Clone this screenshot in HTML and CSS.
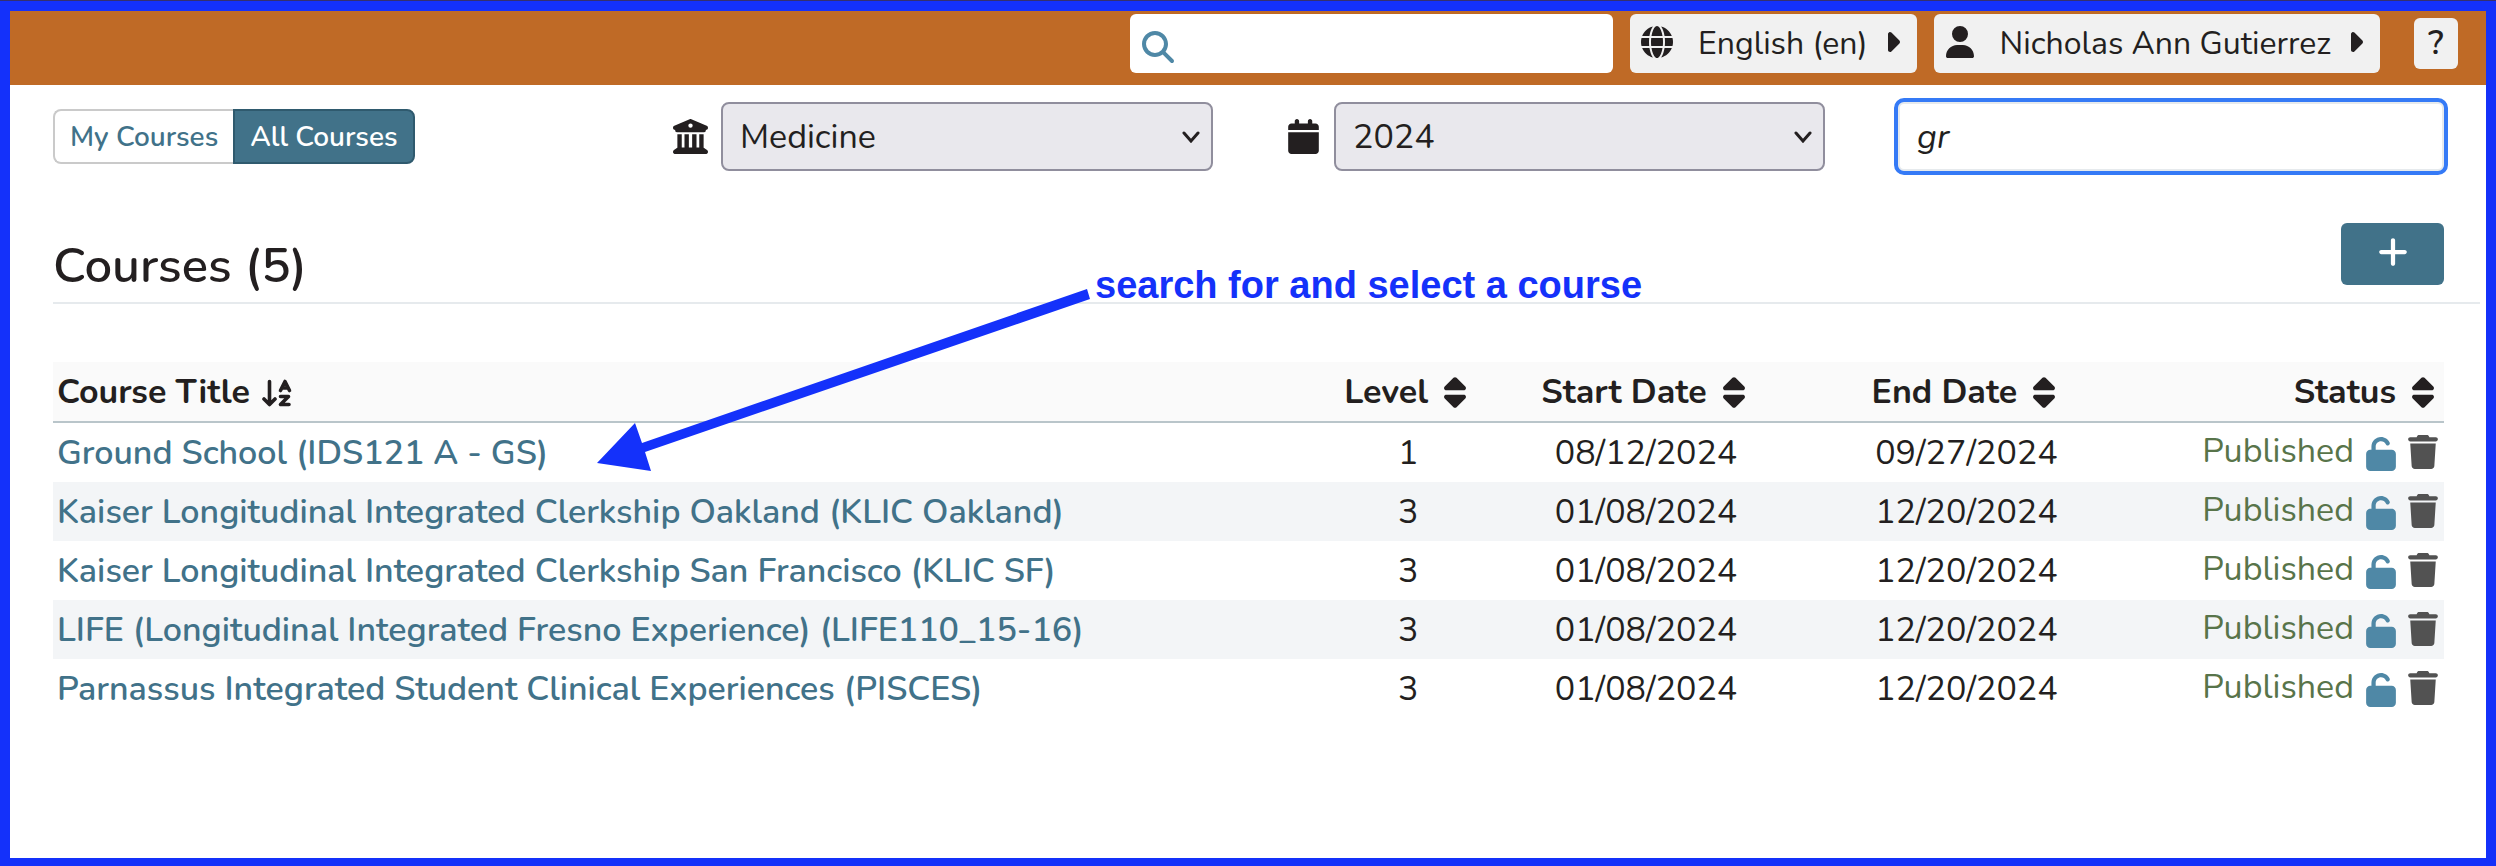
FILE: index.html
```html
<!DOCTYPE html>
<html lang="en">
<head>
<meta charset="utf-8">
<title>Courses</title>
<link rel="stylesheet" href="styles.css">
</head>
<body>
<svg class="sprite" aria-hidden="true">
  <symbol id="search" viewBox="0 0 512 512"><path d="M416 208c0 45.900-14.900 88.300-40 122.700L502.600 457.400c12.500 12.500 12.500 32.800 0 45.300s-32.800 12.500-45.300 0L330.700 376c-34.400 25.200-76.800 40-122.700 40C93.100 416 0 322.900 0 208S93.100 0 208 0S416 93.100 416 208zM208 352a144 144 0 1 0 0-288 144 144 0 1 0 0 288z"/></symbol>
  <symbol id="globe" viewBox="0 0 512 512"><path d="M352 256c0 22.200-1.200 43.600-3.300 64l-185.300 0c-2.200-20.400-3.300-41.800-3.300-64s1.200-43.600 3.300-64l185.300 0c2.200 20.400 3.300 41.800 3.300 64zm28.800-64l123.100 0c5.300 20.500 8.100 41.900 8.100 64s-2.800 43.500-8.100 64l-123.100 0c2.100-20.600 3.200-42 3.200-64s-1.100-43.400-3.200-64zm112.600-32l-116.700 0c-10-63.900-29.800-117.400-55.300-151.600c78.300 20.700 142 77.500 171.900 151.600zm-149.100 0l-176.600 0c6.100-36.400 15.500-68.600 27-94.700c10.500-23.600 22.200-40.700 33.500-51.500C239.400 3.200 248.700 0 256 0s16.600 3.200 27.800 13.800c11.300 10.800 23 27.900 33.500 51.500c11.600 26 20.900 58.200 27 94.700zm-209 0L18.600 160C48.600 85.900 112.200 29.100 190.600 8.400C165.100 42.600 145.300 96.100 135.300 160zM8.100 192l123.100 0c-2.100 20.600-3.200 42-3.200 64s1.100 43.400 3.200 64L8.100 320C2.800 299.500 0 278.100 0 256s2.800-43.500 8.100-64zM194.700 446.600c-11.600-26-20.900-58.200-27-94.600l176.600 0c-6.100 36.400-15.500 68.600-27 94.600c-10.500 23.600-22.200 40.700-33.500 51.500C272.600 508.800 263.300 512 256 512s-16.600-3.200-27.800-13.800c-11.300-10.800-23-27.900-33.500-51.500zM135.300 352c10 63.900 29.800 117.400 55.300 151.600C112.200 482.900 48.600 426.100 18.600 352l116.700 0zm358.100 0c-30 74.100-93.600 130.900-171.900 151.600c25.500-34.200 45.200-87.700 55.300-151.600l116.700 0z"/></symbol>
  <symbol id="user" viewBox="0 0 448 512"><path d="M224 256A128 128 0 1 0 224 0a128 128 0 1 0 0 256zm-45.700 48C79.800 304 0 383.800 0 482.300C0 498.700 13.300 512 29.700 512l388.600 0c16.400 0 29.700-13.300 29.700-29.700C448 383.800 368.200 304 269.700 304l-91.400 0z"/></symbol>
  <symbol id="caret" viewBox="64 0 192 512"><path d="M246.600 278.600c12.500-12.500 12.500-32.800 0-45.300l-128-128c-9.200-9.200-22.900-11.900-34.900-6.900s-19.800 16.600-19.800 29.600l0 256c0 12.900 7.800 24.600 19.800 29.600s25.700 2.200 34.900-6.900l128-128z"/></symbol>
  <symbol id="school" viewBox="0 0 512 512"><path d="M243.400 2.600l-224 96c-14 6-21.800 21-18.700 35.800S16.800 160 32 160l0 8c0 13.300 10.700 24 24 24l400 0c13.300 0 24-10.700 24-24l0-8c15.200 0 28.300-10.700 31.300-25.600s-4.800-29.900-18.700-35.800l-224-96c-8-3.400-17.200-3.400-25.200 0zM128 224l-64 0 0 196.300c-.6 .3-1.200 .7-1.800 1.100l-48 32c-11.700 7.800-17 22.400-12.900 35.900S17.900 512 32 512l448 0c14.100 0 26.500-9.200 30.600-22.700s-1.100-28.100-12.900-35.900l-48-32c-.6-.4-1.200-.7-1.800-1.100L448 224l-64 0 0 192-40 0 0-192-64 0 0 192-48 0 0-192-64 0 0 192-40 0 0-192zM256 64a32 32 0 1 1 0 64 32 32 0 1 1 0-64z"/></symbol>
  <symbol id="calendar" viewBox="0 0 448 512"><path d="M96 32l0 32L48 64C21.500 64 0 85.500 0 112l0 48 448 0 0-48c0-26.500-21.500-48-48-48l-48 0 0-32c0-17.700-14.300-32-32-32s-32 14.300-32 32l0 32L160 64l0-32c0-17.700-14.300-32-32-32S96 14.300 96 32zM448 192L0 192 0 464c0 26.500 21.500 48 48 48l352 0c26.500 0 48-21.500 48-48l0-272z"/></symbol>
  <symbol id="plus" viewBox="0 0 448 512"><path d="M256 80c0-17.700-14.300-32-32-32s-32 14.300-32 32l0 144L48 224c-17.700 0-32 14.300-32 32s14.300 32 32 32l144 0 0 144c0 17.700 14.300 32 32 32s32-14.300 32-32l0-144 144 0c17.700 0 32-14.300 32-32s-14.300-32-32-32l-144 0 0-144z"/></symbol>
  <symbol id="sort" viewBox="0 0 320 512"><path d="M137.400 41.400c12.500-12.500 32.800-12.500 45.300 0l128 128c9.200 9.200 11.900 22.900 6.900 34.900s-16.600 19.800-29.600 19.800L32 224c-12.900 0-24.600-7.800-29.600-19.800s-2.200-25.700 6.900-34.900l128-128zm0 429.300l-128-128c-9.200-9.200-11.900-22.900-6.900-34.900s16.600-19.800 29.600-19.800l256 0c12.900 0 24.600 7.800 29.600 19.800s2.200 25.700-6.900 34.900l-128 128c-12.500 12.500-32.800 12.500-45.300 0z"/></symbol>
  <symbol id="unlock" viewBox="0 0 448 512"><path d="M144 144c0-44.200 35.800-80 80-80c31.900 0 59.400 18.600 72.300 45.700c7.600 16 26.700 22.800 42.600 15.200s22.800-26.700 15.200-42.600C331 33.700 281.500 0 224 0C144.500 0 80 64.500 80 144l0 48-16 0c-35.300 0-64 28.700-64 64L0 448c0 35.300 28.700 64 64 64l320 0c35.300 0 64-28.700 64-64l0-192c0-35.300-28.700-64-64-64l-240 0 0-48z"/></symbol>
  <symbol id="trash" viewBox="0 0 448 512"><path d="M135.200 17.700L128 32 32 32C14.300 32 0 46.300 0 64S14.300 96 32 96l384 0c17.700 0 32-14.300 32-32s-14.300-32-32-32l-96 0-7.200-14.300C307.400 6.800 296.300 0 284.200 0L163.800 0c-12.100 0-23.200 6.800-28.600 17.700zM416 128L32 128 53.200 467c1.600 25.300 22.600 45 47.900 45l245.800 0c25.300 0 46.300-19.700 47.900-45L416 128z"/></symbol>
  <symbol id="sorted" viewBox="0 0 30 28"><g fill="none" stroke="currentColor" stroke-width="3.600" stroke-linecap="round" stroke-linejoin="round"><path d="M7.500 2.500V25M2 20l5.500 5.500L13 20"/><path d="M18.500 11.500L23 2.500l4.500 9M20.500 9h5"/><path d="M18.500 17.500h8l-8 8h8.500"/></g></symbol>
  <symbol id="chevron" viewBox="0 0 18 12"><path d="M2 2l7 8 7-8" fill="none" stroke="currentColor" stroke-width="3" stroke-linecap="round"/></symbol>
</svg>

<div class="page">
  <header class="topbar">
    <label class="site-search">
      <svg class="icon"><use href="#search"/></svg>
      <input type="search" aria-label="Search">
    </label>
    <button class="menu-button" type="button">
      <svg class="icon"><use href="#globe"/></svg>
      <span>English (en)</span>
      <svg class="caret"><use href="#caret"/></svg>
    </button>
    <button class="menu-button" type="button">
      <svg class="icon user"><use href="#user"/></svg>
      <span>Nicholas Ann Gutierrez</span>
      <svg class="caret"><use href="#caret"/></svg>
    </button>
    <button class="help" type="button">?</button>
  </header>

  <main>
    <div class="filters">
      <div class="toggle">
        <button type="button">My Courses</button><button type="button" class="active">All Courses</button>
      </div>
      <div class="filter">
        <label for="school-select" aria-label="School"><svg class="school"><use href="#school"/></svg></label>
        <div class="select">
          <select id="school-select"><option>Medicine</option></select>
          <svg class="chevron"><use href="#chevron"/></svg>
        </div>
      </div>
      <div class="filter">
        <label for="year-select" aria-label="Year"><svg class="calendar"><use href="#calendar"/></svg></label>
        <div class="select">
          <select id="year-select"><option>2024</option></select>
          <svg class="chevron"><use href="#chevron"/></svg>
        </div>
      </div>
      <input class="title-filter" type="text" value="gr" aria-label="Filter by course title">
    </div>

    <div class="heading">
      <h1>Courses (5)</h1>
      <button type="button" class="add" aria-label="New course"><svg><use href="#plus"/></svg></button>
    </div>

    <table>
      <colgroup><col class="col-title"><col class="col-level"><col class="col-date"><col class="col-date"><col class="col-status"></colgroup>
      <thead>
        <tr>
          <th class="left"><button type="button">Course Title<svg class="sorted"><use href="#sorted"/></svg></button></th>
          <th><button type="button">Level<svg class="sort"><use href="#sort"/></svg></button></th>
          <th><button type="button">Start Date<svg class="sort"><use href="#sort"/></svg></button></th>
          <th><button type="button">End Date<svg class="sort"><use href="#sort"/></svg></button></th>
          <th class="right"><button type="button">Status<svg class="sort"><use href="#sort"/></svg></button></th>
        </tr>
      </thead>
      <tbody>
        <tr>
          <td class="left"><a href="#">Ground School (IDS121 A - GS)</a></td><td>1</td><td>08/12/2024</td><td>09/27/2024</td>
          <td><div class="status"><span>Published</span><button type="button" class="lock" aria-label="Lock"><svg><use href="#unlock"/></svg></button><button type="button" class="remove" aria-label="Delete"><svg><use href="#trash"/></svg></button></div></td>
        </tr>
        <tr>
          <td class="left"><a href="#">Kaiser Longitudinal Integrated Clerkship Oakland (KLIC Oakland)</a></td><td>3</td><td>01/08/2024</td><td>12/20/2024</td>
          <td><div class="status"><span>Published</span><button type="button" class="lock" aria-label="Lock"><svg><use href="#unlock"/></svg></button><button type="button" class="remove" aria-label="Delete"><svg><use href="#trash"/></svg></button></div></td>
        </tr>
        <tr>
          <td class="left"><a href="#">Kaiser Longitudinal Integrated Clerkship San Francisco (KLIC SF)</a></td><td>3</td><td>01/08/2024</td><td>12/20/2024</td>
          <td><div class="status"><span>Published</span><button type="button" class="lock" aria-label="Lock"><svg><use href="#unlock"/></svg></button><button type="button" class="remove" aria-label="Delete"><svg><use href="#trash"/></svg></button></div></td>
        </tr>
        <tr>
          <td class="left"><a href="#">LIFE (Longitudinal Integrated Fresno Experience) (LIFE110_15-16)</a></td><td>3</td><td>01/08/2024</td><td>12/20/2024</td>
          <td><div class="status"><span>Published</span><button type="button" class="lock" aria-label="Lock"><svg><use href="#unlock"/></svg></button><button type="button" class="remove" aria-label="Delete"><svg><use href="#trash"/></svg></button></div></td>
        </tr>
        <tr>
          <td class="left"><a href="#">Parnassus Integrated Student Clinical Experiences (PISCES)</a></td><td>3</td><td>01/08/2024</td><td>12/20/2024</td>
          <td><div class="status"><span>Published</span><button type="button" class="lock" aria-label="Lock"><svg><use href="#unlock"/></svg></button><button type="button" class="remove" aria-label="Delete"><svg><use href="#trash"/></svg></button></div></td>
        </tr>
      </tbody>
    </table>
  </main>

  <svg class="note-arrow" viewBox="0 0 493 182" aria-hidden="true"><polygon points="0,174 38,134 45,154 490,0 493,10 48,163 54,182"/></svg>
  <p class="note">search for and select a course</p>
</div>
</body>
</html>
```
FILE: styles.css
```css
* { box-sizing: border-box; }

body {
  margin: 0;
  color: #231f20;
  background: #fff;
  font-family: Nunito, Lato, "Open Sans", sans-serif;
}

button, input, select {
  margin: 0;
  color: inherit;
  font-family: inherit;
}

svg { display: block; fill: currentColor; }
.sprite { position: absolute; width: 0; height: 0; }

.page {
  position: relative;
  min-height: 100vh;
  border: 10px solid #1431fa;
  border-top-width: 11px;
  border-bottom-width: 8px;
}

.page::before {
  content: "";
  position: absolute;
  top: -11px;
  left: -10px;
  right: -10px;
  height: 1px;
  background: #35306e;
}

/* Top bar */
.topbar {
  display: flex;
  justify-content: flex-end;
  align-items: flex-start;
  gap: 17px;
  padding: 3px 28px 12px;
  background: #bf6a26;
}

.site-search {
  display: flex;
  align-items: center;
  gap: 12px;
  width: 483px;
  height: 59px;
  padding: 0 12px;
  border-radius: 6px;
  background: #fff;
  color: #4f88a6;
}
.icon { flex: none; width: 32px; height: 32px; }
.site-search .icon { margin-top: 6px; }
.site-search input {
  flex: 1;
  min-width: 0;
  border: 0;
  outline: 0;
  background: none;
  font-size: 32px;
}

.menu-button {
  display: flex;
  align-items: center;
  height: 59px;
  padding: 0 17px 0 11px;
  border: 0;
  border-radius: 6px;
  background: #f1f1f1;
  font-size: 32px;
}
.menu-button svg { margin-bottom: 3px; }
.menu-button .user { width: 30px; }
.menu-button span { margin: 0 20px 0 25px; }
.caret { width: 12px; height: 32px; }

.help {
  width: 44px;
  height: 51px;
  margin: 4px 0 0 17px;
  padding: 0 0 2px;
  border: 0;
  border-radius: 6px;
  background: #f1f1f1;
  font-size: 34px;
  font-weight: 600;
}

/* Filters */
main { padding: 17px 42px 0 43px; }

.filters {
  display: grid;
  grid-template-columns: 547fr 540fr 539fr 546fr;
  align-items: center;
  column-gap: 73px;
}

.toggle { display: flex; }
.toggle button {
  height: 55px;
  padding: 0 15px;
  border: 2px solid #cacaca;
  border-right: 0;
  border-radius: 8px 0 0 8px;
  background: #fff;
  color: #417289;
  font-size: 28px;
  font-weight: 600;
}
.toggle .active {
  border: 2px solid #2f5a6e;
  border-radius: 0 8px 8px 0;
  background: #417289;
  color: #fff;
}

.filter { display: flex; align-items: center; gap: 13px; }
.filter label { flex: none; display: flex; justify-content: center; width: 35px; }
.school { width: 35px; height: 35px; }
.calendar { width: 31px; height: 35px; }

.select { position: relative; flex: 1; }
.select select {
  width: 100%;
  height: 69px;
  padding: 0 17px;
  border: 2px solid #908e9d;
  border-radius: 8px;
  appearance: none;
  background: #e9e8ed;
  font-size: 34px;
}
.chevron {
  position: absolute;
  top: 50%;
  right: 13px;
  width: 18px;
  height: 12px;
  margin-top: -6px;
  pointer-events: none;
}

.title-filter {
  width: 100%;
  height: 69px;
  padding: 0 17px;
  border: 2px solid #e6eaed;
  border-radius: 6px;
  outline: 4px solid #357af6;
  font-size: 34px;
  font-style: italic;
}

/* Heading */
.heading {
  display: flex;
  justify-content: space-between;
  align-items: flex-end;
  margin: 52px -36px 58px 0;
  padding: 0 36px 17px 0;
  border-bottom: 2px solid #e6eaed;
}
h1 { margin: 0; font-size: 49px; line-height: 38px; font-weight: 600; }
.add {
  display: flex;
  justify-content: center;
  width: 103px;
  height: 62px;
  padding: 12px 0 0;
  border: 0;
  border-radius: 6px;
  background: #417289;
  color: #fff;
}
.add svg { width: 30px; height: 34px; }

/* Course table */
table { width: 100%; border-collapse: collapse; table-layout: fixed; }
.col-level { width: 6.5%; }
.col-date, .col-status { width: 13.4%; }

th, td { padding: 2px 0 0; text-align: center; font-size: 34px; line-height: 57px; white-space: nowrap; }
td { padding-left: 6px; }
thead tr { border-bottom: 2px solid #b9c5ca; background: #fafafa; }
th button {
  display: inline-flex;
  align-items: center;
  padding: 0;
  border: 0;
  background: none;
  font-size: 34px;
  font-weight: 700;
  line-height: 57px;
  vertical-align: top;
}
.sort { width: 22px; height: 35px; margin-left: 16px; }
.sorted { width: 30px; height: 28px; margin-left: 12px; }

tbody tr:nth-child(even) { background: #f3f5f7; }
.left { padding-left: 4px; text-align: left; }
.right { padding-right: 10px; text-align: right; }
a { color: #417289; font-weight: 600; text-decoration: none; }

.status {
  display: flex;
  justify-content: flex-end;
  align-items: center;
  gap: 12px;
  height: 57px;
  padding: 0 6px 4px 0;
  color: #58744a;
}
.status button { padding: 0; border: 0; background: none; }
.status svg { width: 30px; height: 34px; }
.status .lock { padding-top: 4px; color: #4f88a6; }
.status .remove { color: #525252; }

/* Annotation drawn over the page */
.note-arrow { position: absolute; left: 587px; top: 278px; width: 493px; height: 182px; fill: #1431fa; }
.note {
  position: absolute;
  left: 1085px;
  top: 255px;
  margin: 0;
  color: #1431fa;
  font: 700 38px/38px "Liberation Sans", Arial, sans-serif;
  white-space: nowrap;
}
```
